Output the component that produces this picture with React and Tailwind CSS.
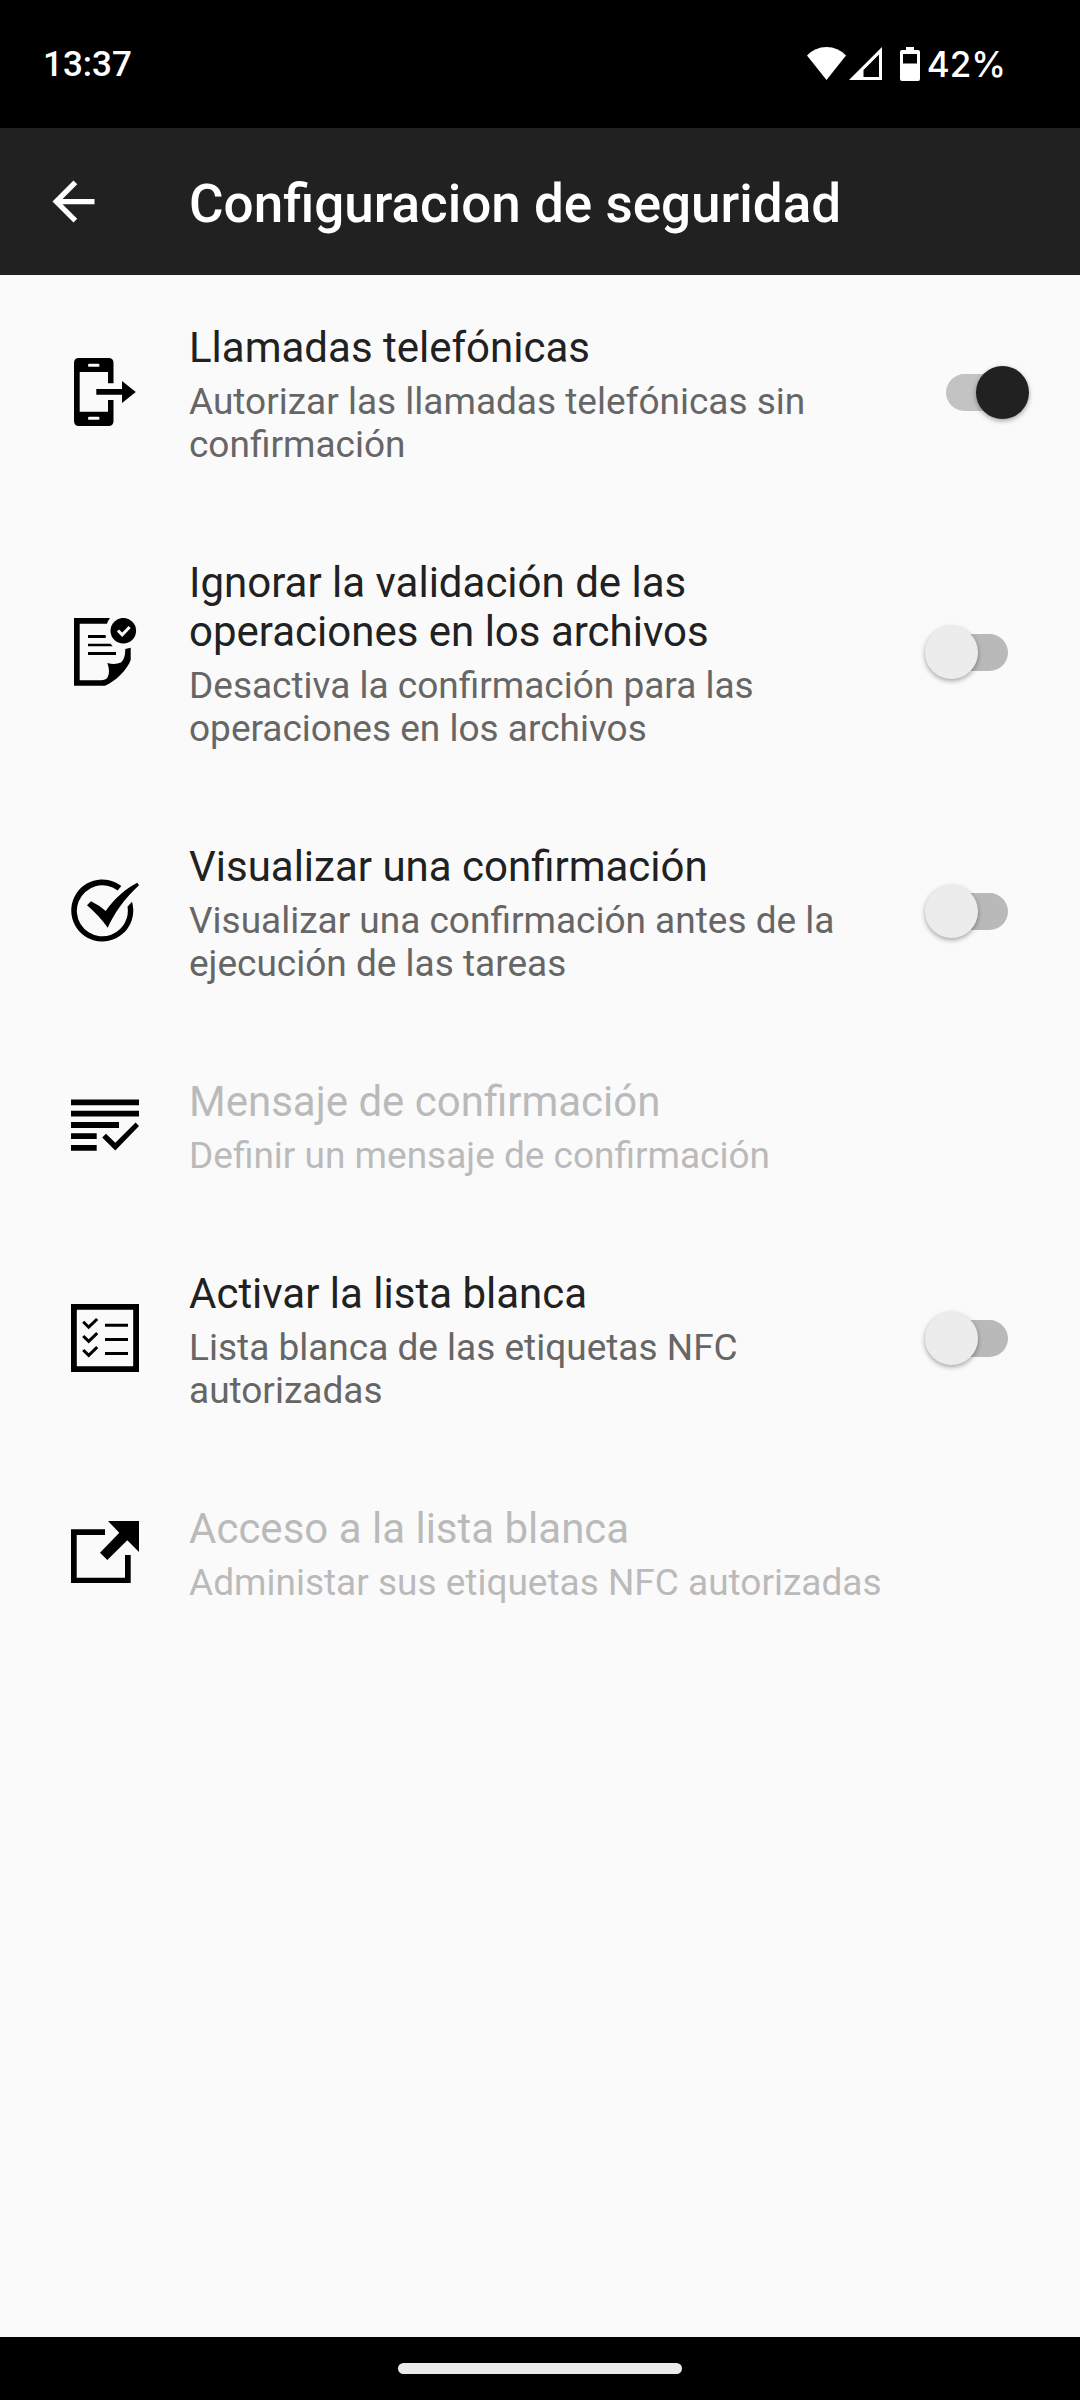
import { useState } from 'react';

const PhoneIcon = () => (
    <svg viewBox="0 0 68 68" className="size-[68px]" aria-hidden="true">
        <path
            fillRule="evenodd"
            d="M8 0H37.5Q42.5 0 42.5 5V25.3H37V14H8.7V53.7H37V42H42.5V63Q42.5 68 37.5 68H8Q3 68 3 63V5Q3 0 8 0ZM18 5.7Q17 5.7 17 7.2T18 8.7H27.5Q28.5 8.7 28.5 7.2T27.5 5.7ZM18 58.7Q17 58.7 17 60.2T18 61.7H27.5Q28.5 61.7 28.5 60.2T27.5 58.7Z"
        />
        <path d="M25.3 31H51V23L64.8 34L51 45V36.8H25.3Z" />
    </svg>
);

const DocumentIcon = () => (
    <svg viewBox="0 0 68 68" className="size-[68px]" aria-hidden="true">
        <path d="M3 0H39Q37 2.5 36 5.7H8.7V62.3H30Q34.5 62.3 36.5 59.5C38.5 56 38.5 51 36.3 45Q44 47 50 44.5Q54.3 41 54.3 31L59.7 29.7V42C56 52 45 63 34 67.7H3Z" />
        <path d="M17 17H34.7V20H17ZM17 25.7H39.5L41.7 28.3H17ZM17 34H45V37H17Z" />
        <circle cx="52.3" cy="12.7" r="12.8" />
        <path d="M48 13.5L51.2 16.8L57.6 10" fill="none" stroke="#fafafa" strokeWidth="3" strokeLinecap="square" />
    </svg>
);

const CheckCircleIcon = () => (
    <svg viewBox="0 0 68 68" className="size-[68px]" aria-hidden="true">
        <path d="M50.3 9A31 31 0 1 0 61 24.7L56.5 29.7A25.5 25.5 0 1 1 46.7 13.5Z" />
        <path d="M20 24.2L16 28.3Q28 38.5 36.7 50.7C43 37 53 22 68 8.3L66.3 5.7C54 12 44 21 34.7 34Q28 28 20 24.2Z" />
    </svg>
);

const MessageIcon = () => (
    <svg viewBox="0 0 68 68" className="size-[68px]" aria-hidden="true">
        <path d="M0 8.4H68V14.2H0ZM0 19.8H68V25.6H0ZM0 31H48V37H0ZM0 42.3H25.7V48H0ZM0 54H25.7V59.7H0Z" />
        <path d="M31.2 46.5L35 42.7L44.3 51.7L64.6 31.5L68 35L44.3 59.4Z" />
    </svg>
);

const ChecklistIcon = () => (
    <svg viewBox="0 0 68 68" className="size-[68px]" aria-hidden="true">
        <path fillRule="evenodd" d="M0 0H68V68H0ZM5.8 5.8V62.2H62.2V5.8Z" />
        <path d="M34 19.7H57V22.7H34ZM34 34H57V37H34ZM34 48H57V51H34Z" />
        <path
            d="M12.2 17.8L17.7 23.2L26.2 15M12.2 32L17.7 37.4L26.2 29.2M12.2 46L17.7 51.4L26.2 43.2"
            fill="none"
            stroke="#000"
            strokeWidth="3"
        />
    </svg>
);

const ExternalIcon = () => (
    <svg viewBox="0 0 68 68" className="size-[68px]" aria-hidden="true">
        <path d="M0 11.3H34V17H5.7V59.7H54V37H59.7V65H0Z" />
        <path d="M37 3H68V34L56.3 22.3L36.3 42L29 34.7L48.3 14.7Z" />
    </svg>
);

const SETTINGS = [
    {
        id: 'calls',
        icon: PhoneIcon,
        title: 'Llamadas telefónicas',
        summary: 'Autorizar las llamadas telefónicas sin confirmación',
        toggle: true,
    },
    {
        id: 'files',
        icon: DocumentIcon,
        title: 'Ignorar la validación de las operaciones en los archivos',
        summary: 'Desactiva la confirmación para las operaciones en los archivos',
        toggle: true,
    },
    {
        id: 'confirm',
        icon: CheckCircleIcon,
        title: 'Visualizar una confirmación',
        summary: 'Visualizar una confirmación antes de la ejecución de las tareas',
        toggle: true,
    },
    {
        id: 'message',
        icon: MessageIcon,
        title: 'Mensaje de confirmación',
        summary: 'Definir un mensaje de confirmación',
        dependsOn: 'confirm',
    },
    {
        id: 'whitelist',
        icon: ChecklistIcon,
        title: 'Activar la lista blanca',
        summary: 'Lista blanca de las etiquetas NFC autorizadas',
        toggle: true,
    },
    {
        id: 'whitelistAccess',
        icon: ExternalIcon,
        title: 'Acceso a la lista blanca',
        summary: 'Administar sus etiquetas NFC autorizadas',
        dependsOn: 'whitelist',
    },
];

const StatusBar = () => (
    <div className="flex h-32 items-center justify-between bg-black pl-[43px] pr-[74px] leading-[42px] font-medium text-white">
        <span className="pt-0.5 text-[35px]">13:37</span>
        <div className="flex items-center">
            <svg viewBox="0 0 39 34" className="mr-[3px] h-[34px] w-[39px] fill-white" aria-hidden="true">
                <path d="M0 8.5Q8 0 19.5 0T39 8.5L19.5 33Z" />
            </svg>
            <svg viewBox="0 0 33 34" className="mr-[18px] h-[34px] w-[33px] fill-white" aria-hidden="true">
                <path fillRule="evenodd" d="M0 33L33 0V33ZM14.5 30H30V7.5L14.5 23Z" />
            </svg>
            <svg viewBox="0 0 20 34" className="mr-[7px] h-[34px] w-5 fill-white" aria-hidden="true">
                <path fillRule="evenodd" d="M6 0H14V3H18Q20 3 20 5V32Q20 34 18 34H2Q0 34 0 32V5Q0 3 2 3H6ZM3 7V16.5H17V7Z" />
            </svg>
            <span className="font-['Inter',sans-serif] text-[35px]">42%</span>
        </div>
    </div>
);

const RowBody = ({ item, disabled }) => {
    const Icon = item.icon;
    return (
        <>
            <span className="mr-[50px] shrink-0 pb-px">
                <Icon />
            </span>
            <span className="min-w-0 flex-1 pt-12 pb-11">
                <span className={`block text-[42px] leading-[49px] ${disabled ? 'text-[#bababa]' : 'text-[#212121]'}`}>
                    {item.title}
                </span>
                <span className={`mt-2 block text-[37px] leading-[43px] ${disabled ? 'text-[#bababa]' : 'text-[#666666]'}`}>
                    {item.summary}
                </span>
            </span>
        </>
    );
};

const rowClass = 'flex w-full items-center pl-[71px] text-left';

const App = () => {
    const [enabled, setEnabled] = useState({ calls: true });

    const toggle = (id) => setEnabled((prev) => ({ ...prev, [id]: !prev[id] }));

    return (
        <div className="flex min-h-screen flex-col bg-[#fafafa] font-['Roboto',sans-serif]">
            <StatusBar />

            <header className="flex h-[147px] items-center bg-[#212121] pl-[42px] text-white">
                <button type="button" aria-label="Volver" className="mr-[84px]">
                    <svg viewBox="0 0 24 24" className="size-[63px] fill-white" aria-hidden="true">
                        <path d="M20 11H7.83l5.59-5.59L12 4l-8 8 8 8 1.41-1.41L7.83 13H20v-2z" />
                    </svg>
                </button>
                <h1 className="pt-1 text-[53px] leading-[62px] font-medium">Configuracion de seguridad</h1>
            </header>

            <main className="flex-1">
                {SETTINGS.map((item) =>
                    item.toggle ? (
                        <label key={item.id} className={`${rowClass} pr-[72px]`}>
                            <RowBody item={item} />
                            {/* Thumb overhangs the track on both sides */}
                            <input
                                type="checkbox"
                                role="switch"
                                checked={!!enabled[item.id]}
                                onChange={() => toggle(item.id)}
                                className="relative ml-[84px] h-[37px] w-[62px] shrink-0 appearance-none rounded-full bg-[#b9b9b9] before:absolute before:-top-2 before:-left-[21px] before:size-[53px] before:rounded-full before:bg-[#ececec] before:shadow-[0_2px_5px_rgba(0,0,0,0.35)] checked:bg-[#c3c3c3] checked:before:left-[30px] checked:before:bg-[#212121]"
                            />
                        </label>
                    ) : (
                        <button
                            key={item.id}
                            type="button"
                            disabled={!enabled[item.dependsOn]}
                            className={`${rowClass} pr-[42px]`}
                        >
                            <RowBody item={item} disabled={!enabled[item.dependsOn]} />
                        </button>
                    )
                )}
            </main>

            <div className="flex h-[63px] items-center justify-center bg-black">
                <div className="h-[11px] w-[284px] rounded-full bg-[#ebebeb]" />
            </div>
        </div>
    );
};

export default App;
